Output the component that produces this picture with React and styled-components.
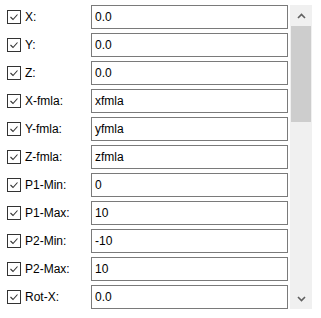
import styled, { createGlobalStyle } from "styled-components";

const GlobalStyle = createGlobalStyle`
  body {
    margin: 0;
    background: #ffffff;
    font-family: "Liberation Sans", Arial, sans-serif;
  }
`;

const fields = [
  { label: "X:", value: "0.0" },
  { label: "Y:", value: "0.0" },
  { label: "Z:", value: "0.0" },
  { label: "X-fmla:", value: "xfmla" },
  { label: "Y-fmla:", value: "yfmla" },
  { label: "Z-fmla:", value: "zfmla" },
  { label: "P1-Min:", value: "0" },
  { label: "P1-Max:", value: "10" },
  { label: "P2-Min:", value: "-10" },
  { label: "P2-Max:", value: "10" },
  { label: "Rot-X:", value: "0.0" },
];

const Panel = styled.div`
  display: flex;
  gap: 2px;
  padding-top: 5px;
  width: 321px;
  height: 313px;
  overflow: hidden;
`;

const List = styled.div`
  display: flex;
  flex-direction: column;
  gap: 4px;
`;

const Row = styled.div`
  display: grid;
  grid-template-columns: 91px 197px;
  align-items: center;
  height: 24px;
`;

const Check = styled.label`
  display: flex;
  align-items: center;
  padding-left: 7px;
  gap: 4px;
  font-size: 12px;
  color: #000;
`;

const Box = styled.span`
  display: flex;
  align-items: center;
  justify-content: center;
  width: 14px;
  height: 14px;
  border: 1px solid #333333;
  box-sizing: border-box;
  background: #fff;
`;

const Field = styled.div`
  box-sizing: border-box;
  height: 24px;
  border: 1px solid #7a7a7a;
  padding: 0 3px;
  display: flex;
  align-items: center;
  font-size: 12px;
  color: #000;
`;

const Scrollbar = styled.div`
  width: 22px;
  height: 304px;
  background: #f0f0f0;
  display: flex;
  flex-direction: column;
`;

const Arrow = styled.div`
  height: 21px;
  display: flex;
  align-items: center;
  justify-content: center;
`;

const Track = styled.div`
  flex: 1;
  display: flex;
  flex-direction: column;
  padding: 0 1px;
`;

const Thumb = styled.div`
  height: 96px;
  background: #cdcdcd;
`;

const CheckMark = () => (
  <svg width="12" height="12" viewBox="0 0 12 12">
    <path d="M2.5 6 L5 8.5 L9.5 3.5" fill="none" stroke="#333" strokeWidth="1.1" />
  </svg>
);

const Chevron = ({ down }) => (
  <svg width="9" height="6" viewBox="0 0 9 6">
    <path
      d={down ? "M1 1 L4.5 4.5 L8 1" : "M1 5 L4.5 1.5 L8 5"}
      fill="none"
      stroke="#606060"
      strokeWidth="1.6"
    />
  </svg>
);

export default function App() {
  return (
    <>
      <GlobalStyle />
      <Panel>
        <List>
          {fields.map((f) => (
            <Row key={f.label}>
              <Check>
                <Box>
                  <CheckMark />
                </Box>
                {f.label}
              </Check>
              <Field>{f.value}</Field>
            </Row>
          ))}
        </List>
        <Scrollbar>
          <Arrow>
            <Chevron />
          </Arrow>
          <Track>
            <Thumb />
          </Track>
          <Arrow>
            <Chevron down />
          </Arrow>
        </Scrollbar>
      </Panel>
    </>
  );
}
